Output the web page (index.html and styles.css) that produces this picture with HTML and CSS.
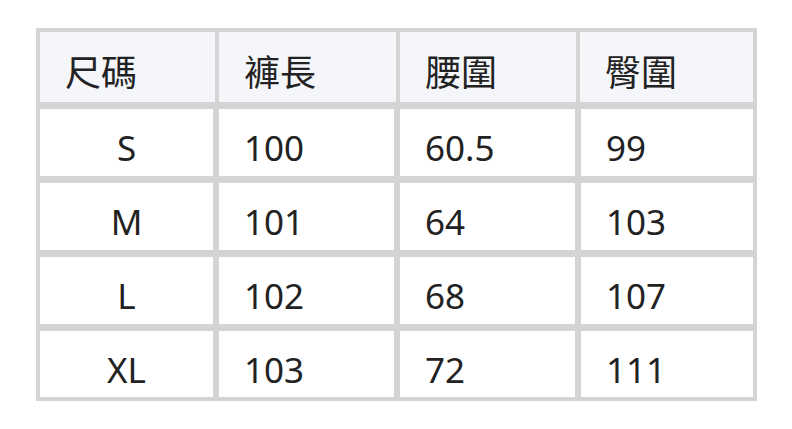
FILE: index.html
```html
<!DOCTYPE html>
<html lang="zh-Hant">
<head>
<meta charset="utf-8">
<link rel="stylesheet" href="styles.css">
</head>
<body>
<div class="size-table">
  <div class="row head">
    <div class="cell">尺碼</div>
    <div class="cell">褲長</div>
    <div class="cell">腰圍</div>
    <div class="cell">臀圍</div>
  </div>
  <div class="row">
    <div class="cell center">S</div>
    <div class="cell">100</div>
    <div class="cell">60.5</div>
    <div class="cell">99</div>
  </div>
  <div class="row">
    <div class="cell center">M</div>
    <div class="cell">101</div>
    <div class="cell">64</div>
    <div class="cell">103</div>
  </div>
  <div class="row">
    <div class="cell center">L</div>
    <div class="cell">102</div>
    <div class="cell">68</div>
    <div class="cell">107</div>
  </div>
  <div class="row last">
    <div class="cell center">XL</div>
    <div class="cell">103</div>
    <div class="cell">72</div>
    <div class="cell">111</div>
  </div>
</div>
</body>
</html>
```

FILE: styles.css
```css
html, body {
  margin: 0;
  padding: 0;
  background: #ffffff;
}
body {
  padding: 28px 0 0 36px;
  font-family: "Noto Sans", "Noto Sans CJK TC", sans-serif;
  color: #222222;
}
.size-table {
  width: 713px;
  background: #d4d4d4;
  padding: 4px;
  display: flex;
  flex-direction: column;
  gap: 7px;
}
.row {
  display: grid;
  grid-template-columns: 173px 175px 175px 172px;
  column-gap: 6px;
  height: 67px;
}
.row.last {
  height: 66px;
}
.row.head {
  grid-template-columns: 175px 177px 176px 173px;
  column-gap: 4px;
  height: 70px;
}
.cell {
  background: #ffffff;
  display: flex;
  align-items: center;
  padding: 10px 0 0 25px;
  font-size: 35px;
  line-height: 1;
}
.head .cell {
  background: #f5f6fa;
  padding-top: 12px;
  font-size: 36px;
}
.cell.center {
  justify-content: center;
  padding-left: 0;
}
```
